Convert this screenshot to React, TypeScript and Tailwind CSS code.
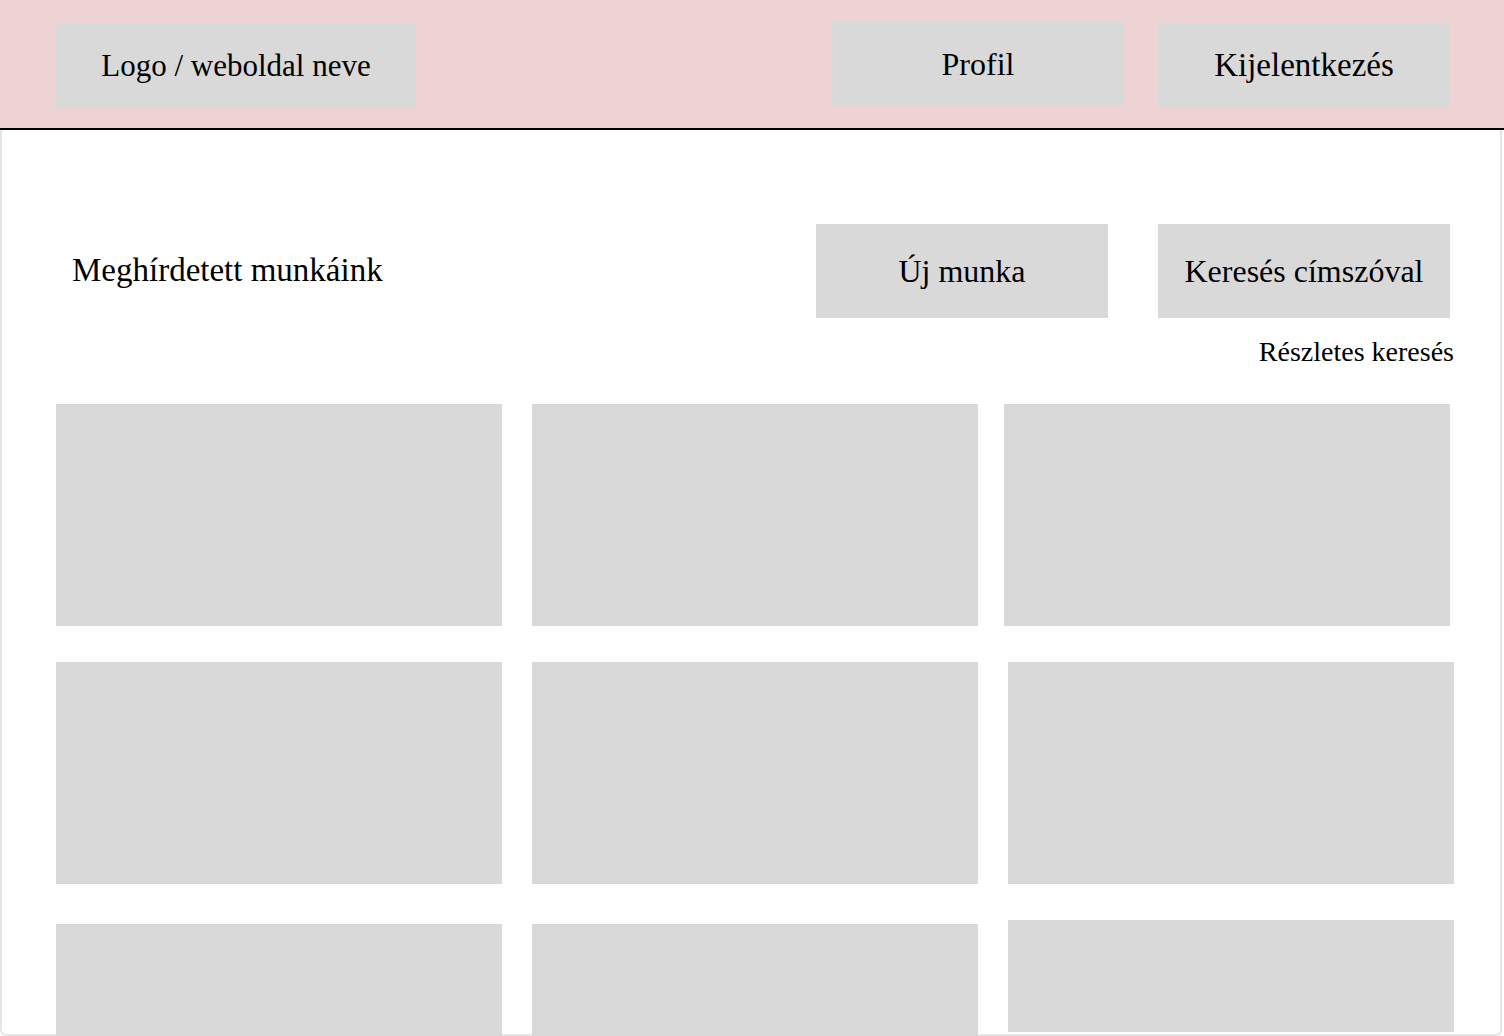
import React from 'react';

const Box: React.FC<{ className?: string; children?: React.ReactNode }> = ({ className = '', children }) => (
  <div className={`flex items-center justify-center bg-[#d9d9d9] ${className}`}>{children}</div>
);

export default function App() {
  return (
    <div className="h-[1036px] w-full overflow-hidden bg-white font-['Liberation_Serif',serif] text-black">
      {/* Header */}
      <header className="flex h-[130px] items-start border-b-2 border-black bg-[#eed3d4]">
        <Box className="ml-[56px] mt-[24px] h-[84px] w-[360px] text-[31px]">Logo / weboldal neve</Box>
        <Box className="ml-auto mt-[22px] h-[84px] w-[292px] text-[32px]">Profil</Box>
        <Box className="ml-[34px] mr-[54px] mt-[24px] h-[84px] w-[292px] text-[33px]">Kijelentkezés</Box>
      </header>

      {/* Content frame */}
      <main className="h-[906px] w-[1502px] rounded-b-[6px] border-x-2 border-b-2 border-[#e5e5e5] pt-[94px]">
        <div className="flex h-[94px] items-center">
          <h1 className="pl-[70px] text-[33px]">Meghírdetett munkáink</h1>
          <Box className="ml-auto h-[94px] w-[292px] text-[32px]">Új munka</Box>
          <Box className="ml-[50px] mr-[50px] h-[94px] w-[292px] text-[32px]">Keresés címszóval</Box>
        </div>

        <div className="mt-[18px] h-[32px] pr-[46px] text-right text-[28px] leading-[32px]">Részletes keresés</div>

        {/* Job cards */}
        <div className="mt-[36px] flex pl-[54px]">
          <Box className="h-[222px] w-[446px]" />
          <Box className="ml-[30px] h-[222px] w-[446px]" />
          <Box className="ml-[26px] h-[222px] w-[446px]" />
        </div>
        <div className="mt-[36px] flex pl-[54px]">
          <Box className="h-[222px] w-[446px]" />
          <Box className="ml-[30px] h-[222px] w-[446px]" />
          <Box className="ml-[30px] h-[222px] w-[446px]" />
        </div>
        <div className="mt-[36px] flex items-start pl-[54px]">
          <Box className="mt-[4px] h-[116px] w-[446px]" />
          <Box className="ml-[30px] mt-[4px] h-[116px] w-[446px]" />
          <Box className="ml-[30px] h-[112px] w-[446px]" />
        </div>
      </main>
    </div>
  );
}
